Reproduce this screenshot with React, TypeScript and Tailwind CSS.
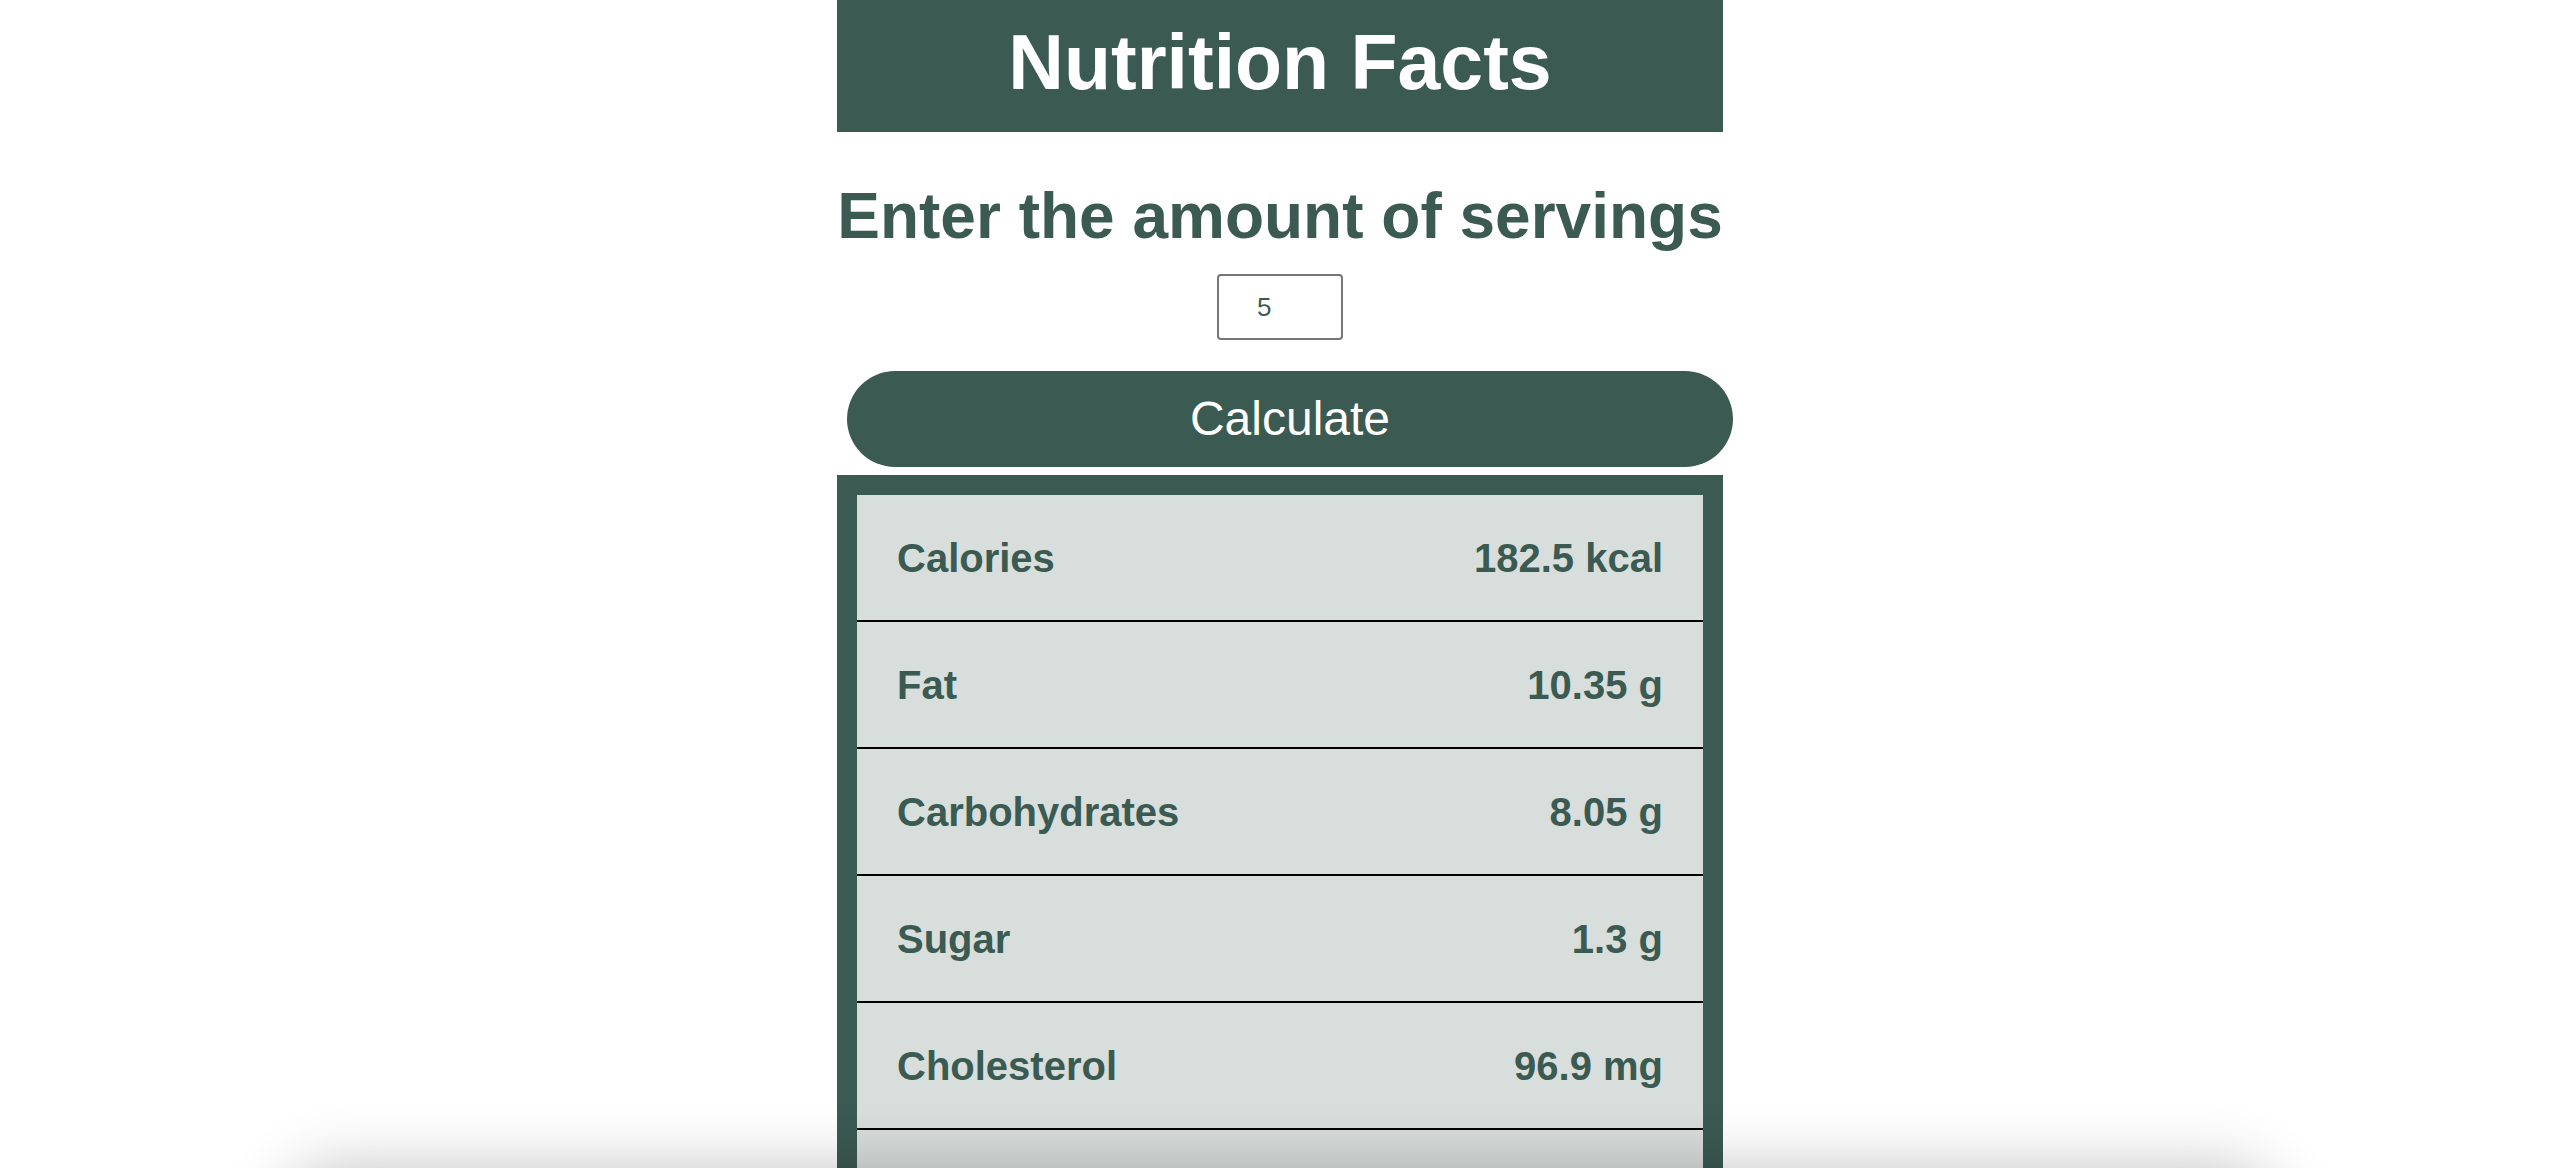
import React from "react";

const rows: { label: string; value: string }[] = [
  { label: "Calories", value: "182.5 kcal" },
  { label: "Fat", value: "10.35 g" },
  { label: "Carbohydrates", value: "8.05 g" },
  { label: "Sugar", value: "1.3 g" },
  { label: "Cholesterol", value: "96.9 mg" },
];

export default function App() {
  return (
    <div
      className="min-h-screen bg-white flex flex-col items-center"
      style={{ fontFamily: '"Liberation Sans", Arial, Helvetica, sans-serif' }}
    >
      <div className="w-[886px] flex flex-col items-center">
        <header className="w-full h-[132px] bg-[#3b5a51] flex items-center justify-center pb-2">
          <h1 className="text-white font-bold text-[77px] leading-[90px]">Nutrition Facts</h1>
        </header>

        <h2 className="mt-[44px] text-[#3b5a51] font-bold text-[64px] leading-[80px] whitespace-nowrap">
          Enter the amount of servings
        </h2>

        <input
          type="number"
          defaultValue={5}
          className="mt-[18px] w-[126px] h-[66px] border-2 border-[#767676] rounded-[4px] pl-[38px] text-[26px] text-[#3b5a51] bg-white outline-none"
          style={{ fontFamily: '"Liberation Sans", Arial, sans-serif' }}
        />

        <button className="mt-[31px] ml-[20px] w-[886px] h-[96px] rounded-full bg-[#3b5a51] text-white text-[48px] leading-none">
          Calculate
        </button>

        <div className="mt-[8px] w-full bg-[#3b5a51] p-[20px]">
          {rows.map((r) => (
            <div
              key={r.label}
              className="h-[127px] bg-[#d8dedc] border-b-2 border-black flex items-center justify-between px-10 text-[#3b5a51] font-bold text-[40px]"
            >
              <span>{r.label}</span>
              <span>{r.value}</span>
            </div>
          ))}
          <div className="h-[127px] bg-[#d8dedc] border-b-2 border-black" />
        </div>
      </div>

      <div className="pointer-events-none fixed left-[280px] right-[280px] top-full h-[120px] rounded-t-[60px] bg-white shadow-[0_0_64px_rgba(0,0,0,0.24)]" />
    </div>
  );
}
